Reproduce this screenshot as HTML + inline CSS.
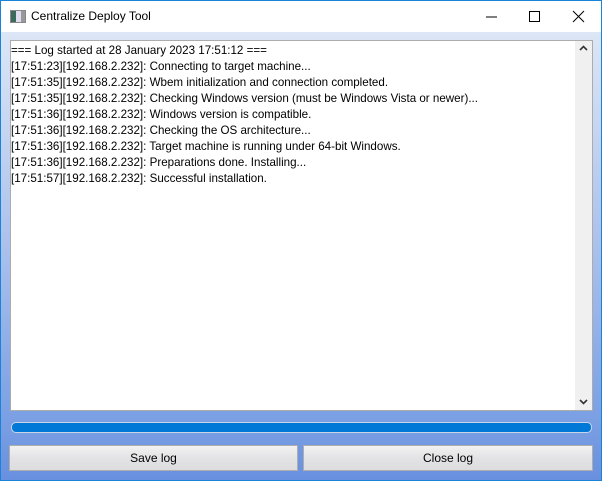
<!DOCTYPE html>
<html><head><style>
body{margin:0;width:602px;height:481px;overflow:hidden;font-family:"Liberation Sans",sans-serif;}
.win{position:absolute;left:0;top:0;width:600px;height:479px;border:1px solid #1883d7;background:linear-gradient(#e0eaf7 0px,#dce6f6 30px,#a9c0ec 250px,#7a9fe3 420px,#6990df 479px);}
.title{position:absolute;left:0;top:0;width:600px;height:31px;background:#fff;}
.title .t{position:absolute;left:30px;top:8px;font-size:12px;color:#000;}
.icon{position:absolute;left:9px;top:9px;width:14px;height:11px;border:1px solid #888;background:linear-gradient(90deg,#3a6a5a 0 5px,#dde 5px 10px,#999 10px);}
.log{position:absolute;left:9px;top:39px;width:581px;height:369px;border:1px solid #acacac;background:#fff;}
.sb{position:absolute;right:0;top:0;width:17px;height:100%;background:#f0f0f0;}
.txt{position:absolute;left:0px;top:2px;font-size:11.6px;line-height:16px;color:#000;white-space:pre;}
.prog{position:absolute;left:10px;top:421px;width:579px;height:9px;border:1px solid #c8d4e8;border-radius:5px;background:#0078d7;}
.btn{position:absolute;top:444px;height:24px;border:1px solid #adadad;background:linear-gradient(#f2f2f2,#e3e3e5 50%,#dddde0);font-size:12px;text-align:center;line-height:24px;color:#000;}
</style></head><body>
<div class="win">
<div class="title"><div class="icon"></div><div class="t">Centralize Deploy Tool</div>
<svg style="position:absolute;left:480px;top:8px" width="110" height="16">
<line x1="5" y1="8" x2="16" y2="8" stroke="#000"/>
<rect x="48.5" y="2.5" width="10" height="10" fill="none" stroke="#000"/>
<path d="M92 2 L103 13 M103 2 L92 13" stroke="#000"/>
</svg></div>
<div class="log"><div class="txt">=== Log started at 28 January 2023 17:51:12 ===
[17:51:23][192.168.2.232]: Connecting to target machine...
[17:51:35][192.168.2.232]: Wbem initialization and connection completed.
[17:51:35][192.168.2.232]: Checking Windows version (must be Windows Vista or newer)...
[17:51:36][192.168.2.232]: Windows version is compatible.
[17:51:36][192.168.2.232]: Checking the OS architecture...
[17:51:36][192.168.2.232]: Target machine is running under 64-bit Windows.
[17:51:36][192.168.2.232]: Preparations done. Installing...
[17:51:57][192.168.2.232]: Successful installation.</div>
<div class="sb"><svg width="17" height="369"><path d="M5 9 L8.5 5.5 L12 9" stroke="#333" stroke-width="1.6" fill="none"/><path d="M5 359 L8.5 362.5 L12 359" stroke="#333" stroke-width="1.6" fill="none"/></svg></div></div>
<div class="prog"></div>
<div class="btn" style="left:8px;width:287px">Save log</div>
<div class="btn" style="left:302px;width:288px">Close log</div>
</div>
</body></html>
